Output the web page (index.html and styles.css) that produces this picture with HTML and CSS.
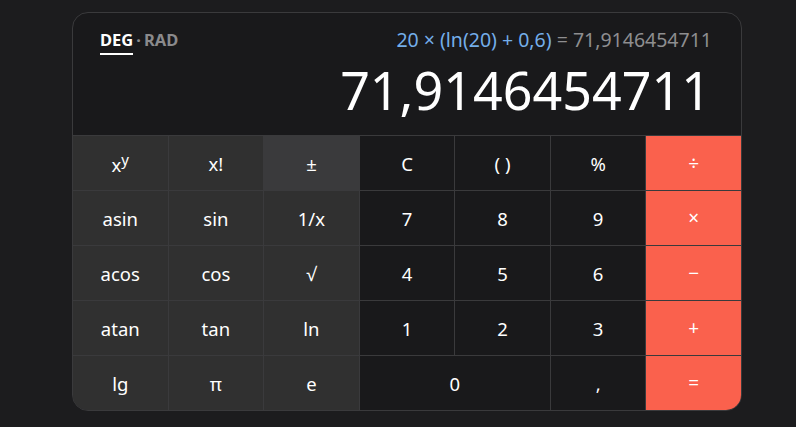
FILE: index.html
```html
<!DOCTYPE html>
<html lang="en">
<head>
  <meta charset="UTF-8">
  <meta name="viewport" content="width=device-width, initial-scale=1.0">
  <title>Calculator</title>
  <link rel="stylesheet" href="styles.css">
</head>
<body>

  <div class="calc">
    <!-- Display -->
    <div class="display">
      <div class="display-top">
        <div class="mode">
          <span class="mode-item active">DEG</span>
          <span class="mode-sep">·</span>
          <span class="mode-item">RAD</span>
        </div>
        <div class="expr">
          <span class="expr-input">20 × (ln(20) + 0,6)</span>
          <span class="expr-result">= 71,9146454711</span>
        </div>
      </div>
      <div class="result">71,9146454711</div>
    </div>

    <!-- Keypad -->
    <div class="keys">
      <button class="key fn">x<sup>y</sup></button>
      <button class="key fn">x!</button>
      <button class="key fn hover">±</button>
      <button class="key">C</button>
      <button class="key">( )</button>
      <button class="key">%</button>
      <button class="key op">÷</button>

      <button class="key fn">asin</button>
      <button class="key fn">sin</button>
      <button class="key fn">1/x</button>
      <button class="key">7</button>
      <button class="key">8</button>
      <button class="key">9</button>
      <button class="key op">×</button>

      <button class="key fn">acos</button>
      <button class="key fn">cos</button>
      <button class="key fn">√</button>
      <button class="key">4</button>
      <button class="key">5</button>
      <button class="key">6</button>
      <button class="key op">−</button>

      <button class="key fn">atan</button>
      <button class="key fn">tan</button>
      <button class="key fn">ln</button>
      <button class="key">1</button>
      <button class="key">2</button>
      <button class="key">3</button>
      <button class="key op">+</button>

      <button class="key fn">lg</button>
      <button class="key fn">π</button>
      <button class="key fn">e</button>
      <button class="key wide">0</button>
      <button class="key">,</button>
      <button class="key op">=</button>
    </div>
  </div>

</body>
</html>
```

FILE: styles.css
```css
/* Base */
* { box-sizing: border-box; margin: 0; padding: 0; }

body {
  font-family: 'Noto Sans', 'Open Sans', Arial, sans-serif;
  background: #1c1c1e;
  color: #fff;
  padding: 12px 0 0 72px;
}

.calc {
  width: 670px;
  border: 1px solid #3a3a3c;
  border-radius: 16px;
  background: #19191b;
  overflow: hidden;
}

/* Display */
.display {
  height: 122px;
  padding: 16px 29px 0 27px;
  display: flex;
  flex-direction: column;
}

.display-top {
  display: flex;
  justify-content: space-between;
  align-items: flex-start;
}

.mode { font-size: 16.5px; font-weight: 700; display: flex; gap: 3px; }
.mode-item { color: #8a8a8c; padding-bottom: 2px; line-height: 22px; }
.mode-item.active { color: #fff; border-bottom: 2px solid #fff; }
.mode-sep { color: #8a8a8c; line-height: 22px; }

.expr { font-size: 19.5px; line-height: 26px; margin-top: -2px; }
.expr-input { color: #74aeea; }
.expr-result { color: #8e8e90; }

.result {
  font-size: 52px;
  line-height: 60px;
  text-align: right;
  margin-top: 5px;
  padding-right: 1px;
}

/* Keypad */
.keys {
  display: grid;
  grid-template-columns: repeat(7, 1fr);
  grid-auto-rows: 54px;
  gap: 1px;
  background: #3a3a3c;
  border-top: 1px solid #3a3a3c;
}

.key {
  border: none;
  background: #19191b;
  color: #fff;
  font-family: inherit;
  font-size: 18.5px;
  cursor: pointer;
}

.key sup { font-size: 15px; vertical-align: 7px; }
.key.fn { background: #303030; }
.key.fn.hover { background: #3a3a3c; }
.key.op { background: #fa614d; font-size: 19px; }
.key.wide { grid-column: span 2; }
```
